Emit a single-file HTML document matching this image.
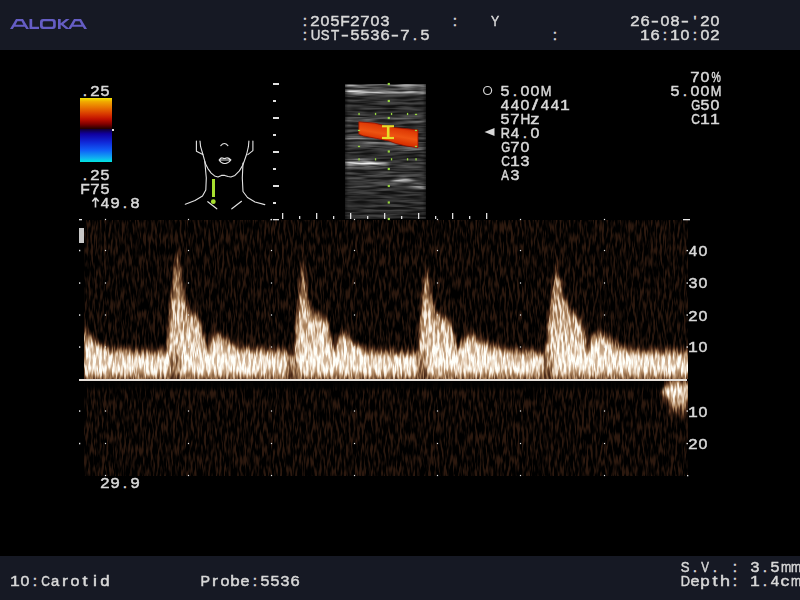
<!DOCTYPE html>
<html><head><meta charset="utf-8">
<style>
html,body{margin:0;padding:0;width:800px;height:600px;overflow:hidden;background:#000}
body{position:relative;font-family:"Liberation Sans",sans-serif;font-size:15.5px;line-height:14px;color:#d8d8d8}
.t{position:absolute;white-space:nowrap;-webkit-text-stroke:0.5px #d8d8d8}
.t i{font-style:normal;display:inline-block;width:10px;text-align:center;height:14px;vertical-align:top;white-space:pre}
.t b{font-weight:normal;display:inline-block}
.a{position:absolute}
#topbar{position:absolute;left:0;top:0;width:800px;height:50px;background:#161924}
#botbar{position:absolute;left:0;top:556px;width:800px;height:44px;background:#161924}
svg{position:absolute;left:0;top:0;overflow:visible}
</style></head><body>
<div id="topbar"></div>
<div id="botbar"></div>
<svg width="800" height="50" viewBox="0 0 800 50"><g fill="#655dc4">
<path fill-rule="evenodd" d="M10,29 L16,19 L23,19 L29,29 L26.2,29 L24.8,26.8 L14.2,26.8 L12.8,29 Z M15.6,24.8 L23.4,24.8 L21.6,21.2 L17.4,21.2 Z"/>
<path d="M29.5,19 L32.2,19 L32.2,26.8 L39,26.8 L39,29 L29.5,29 Z"/>
<path fill-rule="evenodd" d="M43,19 L52.8,19 Q55.8,19 55.8,22 L55.8,26 Q55.8,29 52.8,29 L43,29 Q40,29 40,26 L40,22 Q40,19 43,19 Z M44,21.2 Q42.7,21.2 42.7,22.5 L42.7,25.5 Q42.7,26.8 44,26.8 L51.8,26.8 Q53.1,26.8 53.1,25.5 L53.1,22.5 Q53.1,21.2 51.8,21.2 Z"/>
<path d="M58,19 L60.7,19 L60.7,23.2 L66,19 L69.6,19 L63.4,24 L69.6,29 L66,29 L60.7,24.8 L60.7,29 L58,29 Z"/>
<path fill-rule="evenodd" d="M68,29 L74,19 L81,19 L87,29 L84.2,29 L82.8,26.8 L72.2,26.8 L70.8,29 Z M73.6,24.8 L81.4,24.8 L79.6,21.2 L75.4,21.2 Z"/>
</g></svg>
<div class="a" style="left:80px;top:98px;width:32px;height:31px;background:linear-gradient(to bottom,#f4e400 0%,#f0a800 12%,#e87000 32%,#d83800 52%,#c01000 68%,#800000 84%,#200000 100%)"></div>
<div class="a" style="left:80px;top:129px;width:32px;height:33px;background:linear-gradient(to bottom,#100030 0%,#1000a0 15%,#1028d8 40%,#1060f8 65%,#10b0f0 88%,#00e8e0 100%)"></div>
<div class="a" style="left:112px;top:129px;width:2px;height:2px;background:#e0e0e0"></div>
<svg width="800" height="600">
<defs>
<linearGradient id="eg" gradientUnits="userSpaceOnUse" x1="0" y1="240" x2="0" y2="380">
<stop offset="0.07" stop-color="#505050"/><stop offset="0.36" stop-color="#9c9c9c"/><stop offset="0.57" stop-color="#c0c0c0"/><stop offset="0.714" stop-color="#d8d8d8"/>
<stop offset="0.8" stop-color="#f0f0f0"/><stop offset="0.843" stop-color="#ffffff"/><stop offset="0.943" stop-color="#ffffff"/><stop offset="0.979" stop-color="#707070"/><stop offset="1" stop-color="#404040"/>
</linearGradient>
<clipPath id="ca"><rect x="84" y="220" width="604" height="159"/></clipPath>
<clipPath id="cb"><rect x="84" y="381" width="604" height="95"/></clipPath>
<filter id="sp" filterUnits="userSpaceOnUse" x="60" y="200" width="660" height="300" color-interpolation-filters="sRGB">
<feTurbulence type="fractalNoise" baseFrequency="0.45 0.09" numOctaves="2" seed="7" result="t"/>
<feColorMatrix in="t" type="matrix" values="3 0 0 0 -1  3 0 0 0 -1  3 0 0 0 -1  0 0 0 0 1" result="n00"/>
<feGaussianBlur in="n00" stdDeviation="0.7 1" result="n0"/>
<feComponentTransfer in="n0" result="n"><feFuncR type="gamma" exponent="1.4"/><feFuncG type="gamma" exponent="1.4"/><feFuncB type="gamma" exponent="1.4"/></feComponentTransfer>
<feGaussianBlur in="SourceGraphic" stdDeviation="1.4 5" result="m"/>
<feComposite in="m" in2="n" operator="arithmetic" k1="0.37" k2="0.68" k3="0.18" k4="-0.03" result="i"/>
<feComponentTransfer in="i">
<feFuncR type="table" tableValues="0 0.30 0.66 0.92 1"/>
<feFuncG type="table" tableValues="0 0.17 0.50 0.84 1"/>
<feFuncB type="table" tableValues="0 0.10 0.35 0.75 0.98"/>
<feFuncA type="linear" slope="0" intercept="1"/>
</feComponentTransfer>
</filter>
</defs>
<g clip-path="url(#ca)"><g filter="url(#sp)">
<rect x="60" y="200" width="660" height="300" fill="#000"/>
<path d="M84,400 L84,330 L90,337 L97,344 L110,351 L140,353 L166,353 L167.8,345 L170.2,310 L172.5,286.7 L174.8,263.3 L176.8,249 L179,249 L180,263.3 L182.5,286.7 L186.8,310 L198,317 L207.2,351 L215.3,333 L227,342 L240,349 L290,353 L294.3,353 L296.8,321.7 L299,296 L301.2,275 L302.4,261 L303.3,256 L304.2,263.3 L305.8,286.7 L309,307.7 L316.3,314.7 L326,317 L330,335 L333.6,353 L338.3,340 L345.3,333 L354.6,345 L366.3,352 L400,354 L418.3,354 L420.3,321.7 L422.6,298.3 L424.7,277.3 L426.1,267 L427.5,270.3 L430.3,293.7 L436,314.7 L446,317 L452,326 L457.2,353 L463,340 L470,335 L479.3,340 L490,346 L510,352 L545,354 L546.8,345 L549.2,317 L551.5,298.3 L553.6,282 L555.8,268 L556.8,260 L559.3,277.3 L563.6,296 L569.3,310 L578,317 L584.5,330 L587.2,353 L593,336 L600,333 L609.3,340 L620,348 L640,352 L680,353 L700,354 L700,400 Z" fill="url(#eg)"/>
<g fill="#000" opacity="0.45"><ellipse cx="175" cy="365" rx="6.5" ry="15"/><ellipse cx="292.5" cy="365" rx="6.5" ry="15"/><ellipse cx="422.5" cy="365" rx="6" ry="15"/><ellipse cx="547.5" cy="365" rx="6.5" ry="15"/></g>
</g></g>
<g clip-path="url(#cb)"><g filter="url(#sp)">
<rect x="60" y="200" width="660" height="300" fill="#000"/>
<rect x="669" y="392" width="20" height="22" fill="#606060"/><ellipse cx="677" cy="391" rx="15" ry="9" fill="#ffffff"/>
</g></g>
<linearGradient id="fb" x1="0" y1="0" x2="0" y2="1"><stop offset="0" stop-color="#000" stop-opacity="1"/><stop offset="0.5" stop-color="#000" stop-opacity="0.8"/><stop offset="1" stop-color="#000" stop-opacity="0"/></linearGradient><rect x="84" y="381" width="580" height="11" fill="url(#fb)"/>
<rect x="79" y="379" width="608" height="2" fill="#e8e2dc"/>
</svg>
<svg width="800" height="600">
<defs>
<clipPath id="cbm"><rect x="345" y="84" width="81" height="135"/></clipPath>
<filter id="bm" filterUnits="userSpaceOnUse" x="330" y="70" width="110" height="160" color-interpolation-filters="sRGB">
<feTurbulence type="fractalNoise" baseFrequency="0.04 0.4" numOctaves="2" seed="11" result="t"/>
<feColorMatrix in="t" type="matrix" values="2.4 0 0 0 -0.7  2.4 0 0 0 -0.7  2.4 0 0 0 -0.7  0 0 0 0 1" result="n1"/>
<feGaussianBlur in="n1" stdDeviation="1.2 0.4" result="n"/>
<feGaussianBlur in="SourceGraphic" stdDeviation="2 1" result="m"/>
<feComposite in="m" in2="n" operator="arithmetic" k1="1.1" k2="0.4" k3="0" k4="0" result="i"/>
<feComponentTransfer in="i"><feFuncA type="linear" slope="0" intercept="1"/></feComponentTransfer>
</filter>
<filter id="rb" filterUnits="userSpaceOnUse" x="350" y="115" width="75" height="40" color-interpolation-filters="sRGB">
<feTurbulence type="fractalNoise" baseFrequency="0.08 0.5" numOctaves="1" seed="3" result="t"/>
<feColorMatrix in="t" type="matrix" values="0 0 0 0 0  0.5 0 0 0 -0.25  0 0 0 0 0  0 0 0 0 0" result="n"/>
<feComposite in="n" in2="SourceGraphic" operator="in" result="n2"/>
<feComposite in="SourceGraphic" in2="n2" operator="arithmetic" k1="0" k2="1" k3="1" k4="0"/>
</filter>
</defs>
<g clip-path="url(#cbm)"><g filter="url(#bm)">
<rect x="330" y="70" width="110" height="160" fill="#000"/>
<rect x="345" y="84" width="81" height="135" fill="#363636"/>
<rect x="345" y="84" width="81" height="2" fill="#9a9a9a"/>
<rect x="345" y="86" width="81" height="5" fill="#505050"/>
<rect x="345" y="91" width="81" height="2.5" fill="#c0c0c0"/>
<rect x="345" y="94" width="81" height="22" fill="#2e2e2e"/>
<path d="M345,116 L426,119 L426,123 L345,121 Z" fill="#4a4a4a"/>
<path d="M345,135 L360,136 L426,150 L426,155 L360,142 L345,140 Z" fill="#5a5a5a"/>
<rect x="345" y="152" width="81" height="8" fill="#2c2c2c"/>
<path d="M345,160 Q365,158 388,163 L388,167 Q365,165 345,167 Z" fill="#a0a0a0"/>
<path d="M392,180 Q400,176 408,178 Q418,183 426,186 L426,189 Q415,187 405,184 Q398,182 392,183 Z" fill="#8a8a8a"/>
<rect x="345" y="190" width="81" height="30" fill="#2c2c2c"/>
</g></g>
<defs><linearGradient id="rg" gradientUnits="userSpaceOnUse" x1="0" y1="0" x2="4" y2="-22" gradientTransform="translate(388,146)"><stop offset="0" stop-color="#b01800"/><stop offset="0.2" stop-color="#d83000"/><stop offset="0.5" stop-color="#ee5412"/><stop offset="0.8" stop-color="#e03c06"/><stop offset="1" stop-color="#b81c00"/></linearGradient></defs><g filter="url(#rb)"><path d="M358.8,121.8 L374.6,123.1 L383,125.2 L394,127.4 L406,128.6 L418,129.9 L418,147.8 L406,146 L395.8,143.5 L389,141 L376.3,138.4 L363.5,135.9 L358.8,134.2 Z" fill="url(#rg)" stroke="#901000" stroke-width="0.8"/></g>
<g fill="#e8dc28">
<rect x="382" y="125.2" width="12" height="2.1"/><rect x="386.9" y="127" width="2.6" height="10"/><rect x="382" y="136.9" width="12" height="2.2"/>
</g>
<g fill="#98d840"><rect x="387.7" y="82.9" width="2.2" height="2.2"/><rect x="387.7" y="99.9" width="2.2" height="2.2"/><rect x="387.7" y="116.9" width="2.2" height="2.2"/><rect x="387.7" y="150.4" width="2.2" height="2.2"/><rect x="387.7" y="167.9" width="2.2" height="2.2"/><rect x="387.7" y="184.9" width="2.2" height="2.2"/><rect x="387.7" y="201.4" width="2.2" height="2.2"/><rect x="387.7" y="217.9" width="2.2" height="2.2"/><rect x="358.4" y="112.9" width="1.3" height="2.2"/><rect x="358.4" y="158.2" width="1.3" height="2.2"/><rect x="374.9" y="112.9" width="1.3" height="2.2"/><rect x="374.9" y="158.2" width="1.3" height="2.2"/><rect x="390.9" y="112.9" width="1.3" height="2.2"/><rect x="390.9" y="158.2" width="1.3" height="2.2"/><rect x="406.9" y="112.9" width="1.3" height="2.2"/><rect x="406.9" y="158.2" width="1.3" height="2.2"/><rect x="414.9" y="113.8" width="2.2" height="1.3"/><rect x="415.4" y="158.2" width="1.3" height="2.2"/><rect x="357.9" y="129.8" width="2.2" height="1.3"/><rect x="414.9" y="129.8" width="2.2" height="1.3"/><rect x="357.9" y="145.8" width="2.2" height="1.3"/><rect x="414.9" y="145.8" width="2.2" height="1.3"/></g>
</svg>
<svg width="800" height="600"><g fill="#e0e0e0"><rect x="273" y="83" width="6" height="2"/><rect x="273" y="100" width="3" height="2"/><rect x="273" y="117" width="6" height="2"/><rect x="273" y="134" width="3" height="2"/><rect x="273" y="151" width="6" height="2"/><rect x="273" y="168" width="3" height="2"/><rect x="273" y="185" width="6" height="2"/><rect x="273" y="202" width="3" height="2"/><rect x="282" y="213" width="1.3" height="6"/><rect x="299" y="216" width="1.3" height="3"/><rect x="316" y="213" width="1.3" height="6"/><rect x="333" y="216" width="1.3" height="3"/><rect x="350" y="213" width="1.3" height="6"/><rect x="367" y="216" width="1.3" height="3"/><rect x="384" y="213" width="1.3" height="6"/><rect x="401" y="216" width="1.3" height="3"/><rect x="418" y="213" width="1.3" height="6"/><rect x="435" y="216" width="1.3" height="3"/><rect x="452" y="213" width="1.3" height="6"/><rect x="469" y="216" width="1.3" height="3"/><rect x="486" y="213" width="1.3" height="6"/><rect x="273" y="219" width="6" height="1.3"/><rect x="270.5" y="219" width="1.3" height="1.3"/></g></svg>
<svg width="800" height="600"><g fill="#e8e8e8"><rect x="104.9" y="218.9" width="1.2" height="1.2"/><rect x="104.9" y="249.9" width="1.2" height="1.2"/><rect x="104.9" y="282.4" width="1.2" height="1.2"/><rect x="104.9" y="314.4" width="1.2" height="1.2"/><rect x="104.9" y="346.4" width="1.2" height="1.2"/><rect x="104.9" y="410.4" width="1.2" height="1.2"/><rect x="104.9" y="442.9" width="1.2" height="1.2"/><rect x="104.9" y="474.9" width="1.2" height="1.2"/><rect x="187.9" y="218.9" width="1.2" height="1.2"/><rect x="187.9" y="249.9" width="1.2" height="1.2"/><rect x="187.9" y="282.4" width="1.2" height="1.2"/><rect x="187.9" y="314.4" width="1.2" height="1.2"/><rect x="187.9" y="346.4" width="1.2" height="1.2"/><rect x="187.9" y="410.4" width="1.2" height="1.2"/><rect x="187.9" y="442.9" width="1.2" height="1.2"/><rect x="187.9" y="474.9" width="1.2" height="1.2"/><rect x="270.9" y="218.9" width="1.2" height="1.2"/><rect x="270.9" y="249.9" width="1.2" height="1.2"/><rect x="270.9" y="282.4" width="1.2" height="1.2"/><rect x="270.9" y="314.4" width="1.2" height="1.2"/><rect x="270.9" y="346.4" width="1.2" height="1.2"/><rect x="270.9" y="410.4" width="1.2" height="1.2"/><rect x="270.9" y="442.9" width="1.2" height="1.2"/><rect x="270.9" y="474.9" width="1.2" height="1.2"/><rect x="353.9" y="218.9" width="1.2" height="1.2"/><rect x="353.9" y="249.9" width="1.2" height="1.2"/><rect x="353.9" y="282.4" width="1.2" height="1.2"/><rect x="353.9" y="314.4" width="1.2" height="1.2"/><rect x="353.9" y="346.4" width="1.2" height="1.2"/><rect x="353.9" y="410.4" width="1.2" height="1.2"/><rect x="353.9" y="442.9" width="1.2" height="1.2"/><rect x="353.9" y="474.9" width="1.2" height="1.2"/><rect x="436.9" y="218.9" width="1.2" height="1.2"/><rect x="436.9" y="249.9" width="1.2" height="1.2"/><rect x="436.9" y="282.4" width="1.2" height="1.2"/><rect x="436.9" y="314.4" width="1.2" height="1.2"/><rect x="436.9" y="346.4" width="1.2" height="1.2"/><rect x="436.9" y="410.4" width="1.2" height="1.2"/><rect x="436.9" y="442.9" width="1.2" height="1.2"/><rect x="436.9" y="474.9" width="1.2" height="1.2"/><rect x="519.9" y="218.9" width="1.2" height="1.2"/><rect x="519.9" y="249.9" width="1.2" height="1.2"/><rect x="519.9" y="282.4" width="1.2" height="1.2"/><rect x="519.9" y="314.4" width="1.2" height="1.2"/><rect x="519.9" y="346.4" width="1.2" height="1.2"/><rect x="519.9" y="410.4" width="1.2" height="1.2"/><rect x="519.9" y="442.9" width="1.2" height="1.2"/><rect x="519.9" y="474.9" width="1.2" height="1.2"/><rect x="603.9" y="218.9" width="1.2" height="1.2"/><rect x="603.9" y="249.9" width="1.2" height="1.2"/><rect x="603.9" y="282.4" width="1.2" height="1.2"/><rect x="603.9" y="314.4" width="1.2" height="1.2"/><rect x="603.9" y="346.4" width="1.2" height="1.2"/><rect x="603.9" y="410.4" width="1.2" height="1.2"/><rect x="603.9" y="442.9" width="1.2" height="1.2"/><rect x="603.9" y="474.9" width="1.2" height="1.2"/><rect x="79" y="249.8" width="1.3" height="1.5"/><rect x="686.5" y="249.9" width="1.5" height="1.3"/><rect x="79" y="282.3" width="1.3" height="1.5"/><rect x="686.5" y="282.4" width="1.5" height="1.3"/><rect x="79" y="314.3" width="1.3" height="1.5"/><rect x="686.5" y="314.4" width="1.5" height="1.3"/><rect x="79" y="346.3" width="1.3" height="1.5"/><rect x="686.5" y="346.4" width="1.5" height="1.3"/><rect x="79" y="410.3" width="1.3" height="1.5"/><rect x="686.5" y="410.4" width="1.5" height="1.3"/><rect x="79" y="442.8" width="1.3" height="1.5"/><rect x="686.5" y="442.9" width="1.5" height="1.3"/><rect x="79" y="219" width="3" height="1.3"/><rect x="683" y="219" width="7" height="1.3"/><rect x="687" y="475" width="1.3" height="1.3"/></g><rect x="79" y="228" width="5" height="15" fill="#c8c8c8"/></svg>
<svg width="800" height="600"><g fill="none" stroke="#e4e4e4" stroke-width="1.1" stroke-linejoin="round" stroke-linecap="round">
<path d="M196.4,141 L196.4,151.2 L202.8,154.6"/>
<path d="M200,141 L200.6,146.7 L202.8,154 L204.5,160.2 L205.6,164.1 L207.9,168.6 L211.2,173.1 L214.6,175.9 L218,177 L221.4,175.4 L224.7,175.4 L228.1,176.5 L230.9,177 L234.9,175.4 L239.4,170.9 L242.7,165.2 L244.4,160.7 L246.7,154 L248.4,146.7 L248.9,141"/>
<path d="M252.9,141 L252.9,150.6 L247.8,154.6"/>
<path d="M204.8,161.5 L206.3,178 L205.8,190 L202.5,196 L195,200.5 L185.3,204.3"/>
<path d="M243,163 L242.3,178 L243,191.5 L247.5,197.5 L255,202 L264.8,204.6"/>
<path d="M207.8,201.7 L216.8,208.8"/><path d="M241.5,201.3 L231.8,208.8"/>
<path d="M220.8,145.6 Q224.4,141.5 227.9,145.6"/>
<path d="M219.1,160 Q221,157.5 222.4,158 Q224.4,159 226.4,158 Q228.4,157.5 230.9,160 Q227.6,164 224.7,163.5 Q221.8,164 219.1,160 Z M220,160 L230,160"/>
</g>
<rect x="212" y="179" width="3" height="18" fill="#a8e030"/>
<circle cx="213.3" cy="201.7" r="2.4" fill="#a8e030"/>
</svg>
<div class="t" style="left:300px;top:14px"><i>:</i><i style="transform:scaleX(1.076)">2</i><i style="transform:scaleX(1.026)">0</i><i style="transform:scaleX(1.034)">5</i><i style="transform:scaleX(1.003)">F</i><i style="transform:scaleX(1.076)">2</i><i style="transform:scaleX(1.079)">7</i><i style="transform:scaleX(1.026)">0</i><i style="transform:scaleX(1.034)">3</i></div>
<div class="t" style="left:450px;top:14px"><i>:</i><i> </i><i> </i><i> </i><i style="transform:scaleX(0.787)">Y</i></div>
<div class="t" style="left:630px;top:14px"><i style="transform:scaleX(1.076)">2</i><i style="transform:scaleX(1.063)">6</i><i style="transform:scaleX(1.5)">-</i><i style="transform:scaleX(1.026)">0</i><i style="transform:scaleX(1.045)">8</i><i style="transform:scaleX(1.5)">-</i><i>'</i><i style="transform:scaleX(1.076)">2</i><i style="transform:scaleX(1.026)">0</i></div>
<div class="t" style="left:300px;top:28px"><i>:</i><i style="transform:scaleX(0.863)">U</i><i style="transform:scaleX(0.852)">S</i><i style="transform:scaleX(0.867)">T</i><i style="transform:scaleX(1.5)">-</i><i style="transform:scaleX(1.034)">5</i><i style="transform:scaleX(1.034)">5</i><i style="transform:scaleX(1.034)">3</i><i style="transform:scaleX(1.063)">6</i><i style="transform:scaleX(1.5)">-</i><i style="transform:scaleX(1.079)">7</i><i>.</i><i style="transform:scaleX(1.034)">5</i></div>
<div class="t" style="left:550px;top:28px"><i>:</i></div>
<div class="t" style="left:640px;top:28px"><i style="transform:scaleX(1.137)">1</i><i style="transform:scaleX(1.063)">6</i><i>:</i><i style="transform:scaleX(1.137)">1</i><i style="transform:scaleX(1.026)">0</i><i>:</i><i style="transform:scaleX(1.026)">0</i><i style="transform:scaleX(1.076)">2</i></div>
<div class="t" style="left:500px;top:84px"><i style="transform:scaleX(1.034)">5</i><i>.</i><i style="transform:scaleX(1.026)">0</i><i style="transform:scaleX(1.026)">0</i><i style="transform:scaleX(0.829)">M</i><br><i style="transform:scaleX(0.973)">4</i><i style="transform:scaleX(0.973)">4</i><i style="transform:scaleX(1.026)">0</i><i style="transform:scaleX(1.400)">/</i><i style="transform:scaleX(0.973)">4</i><i style="transform:scaleX(0.973)">4</i><i style="transform:scaleX(1.137)">1</i><br><i style="transform:scaleX(1.034)">5</i><i style="transform:scaleX(1.079)">7</i><i style="transform:scaleX(0.878)">H</i><i style="transform:scaleX(1.197)">z</i><br><i style="transform:scaleX(0.826)">R</i><i style="transform:scaleX(0.973)">4</i><i>.</i><i style="transform:scaleX(1.026)">0</i><br><i style="transform:scaleX(0.751)">G</i><i style="transform:scaleX(1.079)">7</i><i style="transform:scaleX(1.026)">0</i><br><i style="transform:scaleX(0.774)">C</i><i style="transform:scaleX(1.137)">1</i><i style="transform:scaleX(1.034)">3</i><br><i style="transform:scaleX(0.739)">A</i><i style="transform:scaleX(1.034)">3</i></div>
<svg width="800" height="600"><circle cx="487.6" cy="90.5" r="4" fill="none" stroke="#d8d8d8" stroke-width="1.2"/>
<path d="M484.5,132 L494.5,128 L494.5,136 Z" fill="#d8d8d8"/>
<path d="M95.5,197.8 L92.3,201.5 M95.5,197.8 L98.7,201.5 M95.5,198.5 L95.5,207.5" stroke="#d8d8d8" stroke-width="1.6" fill="none"/></svg>
<div class="t" style="left:690px;top:70px"><i style="transform:scaleX(1.079)">7</i><i style="transform:scaleX(1.026)">0</i><i style="transform:scaleX(0.678)">%</i></div>
<div class="t" style="left:670px;top:84px"><i style="transform:scaleX(1.034)">5</i><i>.</i><i style="transform:scaleX(1.026)">0</i><i style="transform:scaleX(1.026)">0</i><i style="transform:scaleX(0.829)">M</i></div>
<div class="t" style="left:690px;top:98px"><i style="transform:scaleX(0.751)">G</i><i style="transform:scaleX(1.034)">5</i><i style="transform:scaleX(1.026)">0</i><br><i style="transform:scaleX(0.774)">C</i><i style="transform:scaleX(1.137)">1</i><i style="transform:scaleX(1.137)">1</i></div>
<div class="t" style="left:80px;top:84px"><i>.</i><i style="transform:scaleX(1.076)">2</i><i style="transform:scaleX(1.034)">5</i></div>
<div class="t" style="left:80px;top:168px"><i>.</i><i style="transform:scaleX(1.076)">2</i><i style="transform:scaleX(1.034)">5</i><br><i style="transform:scaleX(1.003)">F</i><i style="transform:scaleX(1.079)">7</i><i style="transform:scaleX(1.034)">5</i></div>
<div class="t" style="left:100px;top:196px"><i style="transform:scaleX(0.973)">4</i><i style="transform:scaleX(1.062)">9</i><i>.</i><i style="transform:scaleX(1.045)">8</i></div>
<div class="t" style="left:100px;top:476px"><i style="transform:scaleX(1.076)">2</i><i style="transform:scaleX(1.062)">9</i><i>.</i><i style="transform:scaleX(1.062)">9</i></div>
<div class="t" style="left:688px;top:244px"><i style="transform:scaleX(0.973)">4</i><i style="transform:scaleX(1.026)">0</i></div>
<div class="t" style="left:688px;top:276px"><i style="transform:scaleX(1.034)">3</i><i style="transform:scaleX(1.026)">0</i></div>
<div class="t" style="left:688px;top:309px"><i style="transform:scaleX(1.076)">2</i><i style="transform:scaleX(1.026)">0</i></div>
<div class="t" style="left:688px;top:340px"><i style="transform:scaleX(1.137)">1</i><i style="transform:scaleX(1.026)">0</i></div>
<div class="t" style="left:688px;top:405px"><i style="transform:scaleX(1.137)">1</i><i style="transform:scaleX(1.026)">0</i></div>
<div class="t" style="left:688px;top:437px"><i style="transform:scaleX(1.076)">2</i><i style="transform:scaleX(1.026)">0</i></div>
<div class="t" style="left:10px;top:574px"><i style="transform:scaleX(1.137)">1</i><i style="transform:scaleX(1.026)">0</i><i>:</i><i style="transform:scaleX(0.774)">C</i><i style="transform:scaleX(0.955)">a</i><i style="transform:scaleX(1.150)">r</i><i style="transform:scaleX(1.038)">o</i><i style="transform:scaleX(1.150)">t</i><i style="transform:scaleX(1.150)">i</i><i style="transform:scaleX(1.090)">d</i></div>
<div class="t" style="left:200px;top:574px"><i style="transform:scaleX(0.921)">P</i><i style="transform:scaleX(1.150)">r</i><i style="transform:scaleX(1.038)">o</i><i style="transform:scaleX(1.090)">b</i><i style="transform:scaleX(1.045)">e</i><i>:</i><i style="transform:scaleX(1.034)">5</i><i style="transform:scaleX(1.034)">5</i><i style="transform:scaleX(1.034)">3</i><i style="transform:scaleX(1.063)">6</i></div>
<div class="t" style="left:680px;top:560px"><i style="transform:scaleX(0.852)">S</i><i>.</i><i style="transform:scaleX(0.745)">V</i><i>.</i><i> </i><i>:</i><i> </i><i style="transform:scaleX(1.034)">3</i><i>.</i><i style="transform:scaleX(1.034)">5</i><i style="transform:scaleX(0.792)">m</i><i style="transform:scaleX(0.792)">m</i><br><i style="transform:scaleX(0.828)">D</i><i style="transform:scaleX(1.045)">e</i><i style="transform:scaleX(1.090)">p</i><i style="transform:scaleX(1.150)">t</i><i style="transform:scaleX(1.162)">h</i><i>:</i><i> </i><i style="transform:scaleX(1.137)">1</i><i>.</i><i style="transform:scaleX(0.973)">4</i><i style="transform:scaleX(1.137)">c</i><i style="transform:scaleX(0.792)">m</i></div>
</body></html>
